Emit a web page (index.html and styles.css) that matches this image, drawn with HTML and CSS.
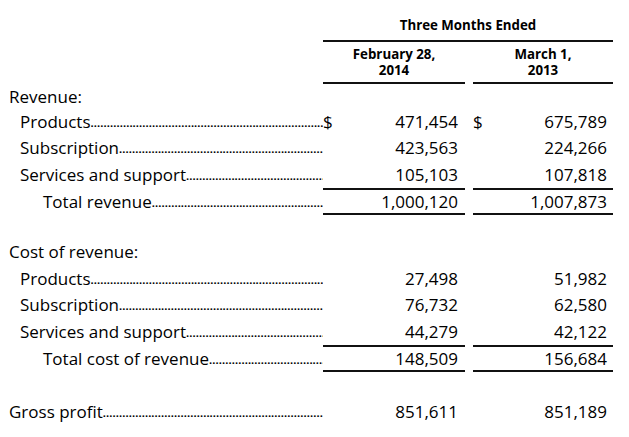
FILE: index.html
```html
<!DOCTYPE html>
<html lang="en">
<head>
<meta charset="utf-8">
<title>Revenue table</title>
<link rel="stylesheet" href="styles.css">
</head>
<body>
<div class="sheet">
  <div class="row head-top">
    <div class="cell-label"></div>
    <div class="head-span">Three Months Ended</div>
  </div>
  <div class="row head-dates">
    <div class="cell-label"></div>
    <div class="head-col c1"><span class="hl">February 28,</span><span class="hl">2014</span></div>
    <div class="head-col c2"><span class="hl">March 1,</span><span class="hl">2013</span></div>
  </div>

  <div class="row first">
    <div class="cell-label lvl0"><span class="txt">Revenue:</span></div>
  </div>
  <div class="row">
    <div class="cell-label lvl1"><span class="txt">Products</span><span class="leader"></span></div>
    <div class="val c1"><span class="cur">$</span><span class="num">471,454</span></div>
    <div class="val c2"><span class="cur">$</span><span class="num">675,789</span></div>
  </div>
  <div class="row">
    <div class="cell-label lvl1"><span class="txt">Subscription</span><span class="leader"></span></div>
    <div class="val c1"><span class="num">423,563</span></div>
    <div class="val c2"><span class="num">224,266</span></div>
  </div>
  <div class="row">
    <div class="cell-label lvl1"><span class="txt">Services and support</span><span class="leader"></span></div>
    <div class="val c1"><span class="num">105,103</span></div>
    <div class="val c2"><span class="num">107,818</span></div>
  </div>
  <div class="row total">
    <div class="cell-label lvl2"><span class="txt">Total revenue</span><span class="leader"></span></div>
    <div class="val c1"><span class="num">1,000,120</span></div>
    <div class="val c2"><span class="num">1,007,873</span></div>
  </div>

  <div class="spacer"></div>

  <div class="row">
    <div class="cell-label lvl0"><span class="txt">Cost of revenue:</span></div>
  </div>
  <div class="row">
    <div class="cell-label lvl1"><span class="txt">Products</span><span class="leader"></span></div>
    <div class="val c1"><span class="num">27,498</span></div>
    <div class="val c2"><span class="num">51,982</span></div>
  </div>
  <div class="row">
    <div class="cell-label lvl1"><span class="txt">Subscription</span><span class="leader"></span></div>
    <div class="val c1"><span class="num">76,732</span></div>
    <div class="val c2"><span class="num">62,580</span></div>
  </div>
  <div class="row">
    <div class="cell-label lvl1"><span class="txt">Services and support</span><span class="leader"></span></div>
    <div class="val c1"><span class="num">44,279</span></div>
    <div class="val c2"><span class="num">42,122</span></div>
  </div>
  <div class="row total">
    <div class="cell-label lvl2"><span class="txt">Total cost of revenue</span><span class="leader"></span></div>
    <div class="val c1"><span class="num">148,509</span></div>
    <div class="val c2"><span class="num">156,684</span></div>
  </div>

  <div class="spacer spacer-lg"></div>

  <div class="row">
    <div class="cell-label lvl0"><span class="txt">Gross profit</span><span class="leader"></span></div>
    <div class="val c1"><span class="num">851,611</span></div>
    <div class="val c2"><span class="num">851,189</span></div>
  </div>
</div>
</body>
</html>
```

FILE: styles.css
```css
html, body {
  margin: 0;
  padding: 0;
  background: #fff;
}

body {
  font-family: "Open Sans", "Liberation Sans", sans-serif;
  color: #000;
}

.sheet {
  padding: 0 0 0 9px;
  width: 620px;
}

.row {
  display: grid;
  grid-template-columns: 314px 142px 148px;
  height: 26.6px;
  align-items: center;
  font-size: 17px;
}

.head-top {
  height: 42px;
  align-items: end;
}

.head-span {
  grid-column: 2 / 4;
  font-weight: 700;
  font-size: 13.3px;
  padding-bottom: 6px;
  border-bottom: 2px solid #111;
  box-sizing: border-box;
  height: 100%;
  display: flex;
  align-items: flex-end;
  justify-content: center;
}

.head-dates {
  height: 42px;
  align-items: stretch;
}

.head-col {
  display: flex;
  flex-direction: column;
  align-items: center;
  font-weight: 700;
  font-size: 13.3px;
  text-align: center;
  border-bottom: 2px solid #111;
  padding-top: 5px;
  box-sizing: border-box;
}

.hl {
  display: block;
  height: 15.5px;
  line-height: 15.5px;
}

.head-col.c2 {
  margin-left: 8px;
}

.first {
  height: 24px;
}

.cell-label {
  display: flex;
  align-items: center;
  overflow: hidden;
  white-space: nowrap;
  height: 100%;
  align-self: stretch;
}

.cell-label .txt {
  flex: none;
}

.lvl0 { padding-left: 0; }
.lvl1 { padding-left: 11px; }
.lvl2 { padding-left: 34px; }

.leader {
  flex: 1;
  min-width: 0;
  overflow: hidden;
  height: 100%;
  position: relative;
}

.leader::after {
  content: "........................................................................................................................................................................................";
  position: absolute;
  left: 0;
  bottom: 7px;
  font-size: 11px;
  font-weight: 700;
  letter-spacing: 0.1px;
  color: #000;
  line-height: 1;
}

.val {
  display: flex;
  justify-content: space-between;
  align-items: center;
  height: 100%;
  box-sizing: border-box;
}

.val.c1 {
  padding-right: 7px;
}

.val.c2 {
  margin-left: 8px;
  padding-right: 6px;
}

.val .num {
  margin-left: auto;
}

.cur {
  margin-right: auto;
}

.total .val {
  border-top: 2px solid #111;
  border-bottom: 2px solid #111;
}

.spacer {
  height: 24px;
}

.spacer-lg {
  height: 27px;
}
```
